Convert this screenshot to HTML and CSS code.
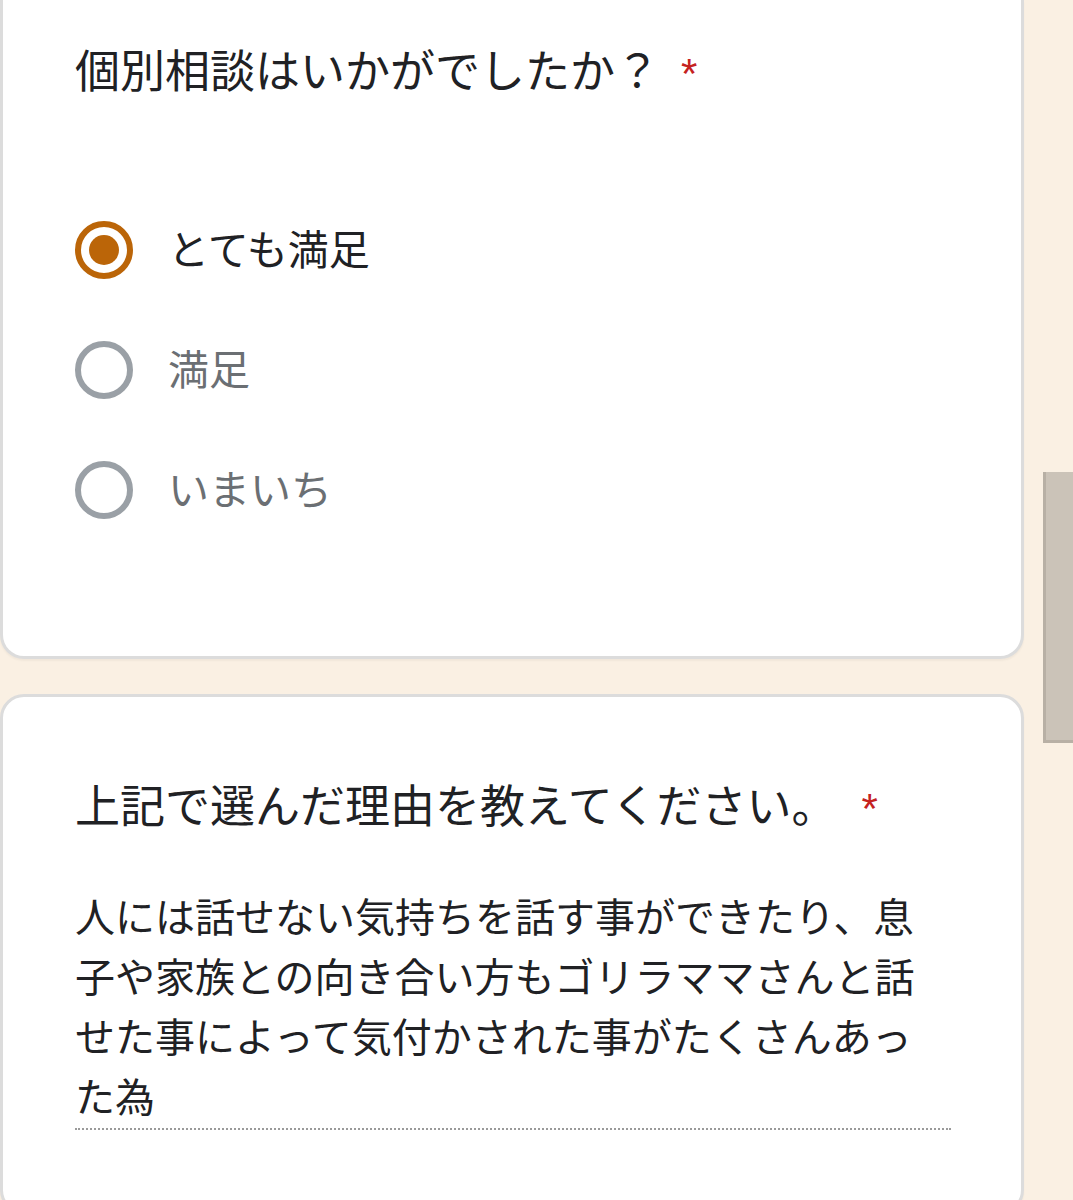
FILE: index.html
```html
<!DOCTYPE html>
<html lang="ja">
<head>
    <meta charset="UTF-8">
    <meta name="viewport" content="width=device-width, initial-scale=1.0">
    <title>個別相談アンケート</title>
    <link rel="stylesheet" href="styles.css">
</head>
<body>

<div class="form-page">

    <!-- Question 1 -->
    <section class="question-card first-card">
        <h2 class="question-title">個別相談はいかがでしたか？<span class="required">*</span></h2>

        <div class="options">
            <div class="option selected">
                <span class="radio"><span class="radio-dot"></span></span>
                <span class="option-label">とても満足</span>
            </div>
            <div class="option">
                <span class="radio"></span>
                <span class="option-label">満足</span>
            </div>
            <div class="option">
                <span class="radio"></span>
                <span class="option-label">いまいち</span>
            </div>
        </div>
    </section>

    <!-- Question 2 -->
    <section class="question-card second-card">
        <h2 class="question-title">上記で選んだ理由を教えてください。<span class="required">*</span></h2>

        <div class="answer">人には話せない気持ちを話す事ができたり、息子や家族との向き合い方もゴリラママさんと話せた事によって気付かされた事がたくさんあった為</div>
    </section>

</div>

<!-- Scrollbar thumb -->
<div class="scroll-thumb"></div>

</body>
</html>
```

FILE: styles.css
```css
/* Global Styles */
body {
    font-family: "Noto Sans CJK JP", "Noto Sans", sans-serif;
    margin: 0;
    padding: 0;
    background-color: #faf0e3;
    color: #202124;
    overflow: hidden;
}

.form-page {
    width: 1024px;
}

/* Cards */
.question-card {
    background: #fff;
    border: 3px solid #dcdcdc;
    border-radius: 24px;
    box-sizing: border-box;
    box-shadow: 0 2px 2px rgba(0, 0, 0, 0.04);
}

.first-card {
    border-top: none;
    border-top-left-radius: 0;
    border-top-right-radius: 0;
    padding: 39px 0 106px 72px;
}

.second-card {
    margin-top: 35px;
    padding: 77px 0 120px 72px;
    height: 520px;
}

.question-title {
    margin: 0;
    font-size: 45px;
    font-weight: 400;
    line-height: 60px;
    color: #202124;
}

.required {
    font-family: "Liberation Sans", sans-serif;
    color: #c5221f;
    font-size: 42px;
    margin-left: 21px;
}

.second-card .required {
    margin-left: 25px;
}

/* Radio options */
.options {
    margin-top: 86px;
}

.option {
    display: flex;
    align-items: center;
    height: 120px;
}

.radio {
    width: 58px;
    height: 58px;
    box-sizing: border-box;
    border: 6px solid #9aa0a6;
    border-radius: 50%;
    display: flex;
    align-items: center;
    justify-content: center;
    flex-shrink: 0;
}

.option.selected .radio {
    border-color: #bb6508;
}

.radio-dot {
    width: 30px;
    height: 30px;
    border-radius: 50%;
    background-color: #bb6508;
}

.option-label {
    margin-left: 35px;
    padding-bottom: 6px;
    font-size: 41px;
    color: #6b6f73;
}

.option.selected .option-label {
    color: #202124;
}

/* Text answer */
.answer {
    margin-top: 46px;
    padding-bottom: 3px;
    width: 876px;
    font-size: 40px;
    line-height: 60px;
    color: #202124;
    border-bottom: 2px dotted #9a9a9a;
}

/* Scrollbar */
.scroll-thumb {
    position: fixed;
    left: 1043px;
    top: 472px;
    width: 30px;
    height: 271px;
    box-sizing: border-box;
    background-color: #cbc3b8;
    border-left: 3px solid #b8b0a5;
    border-bottom: 3px solid #b8b0a5;
}
```
